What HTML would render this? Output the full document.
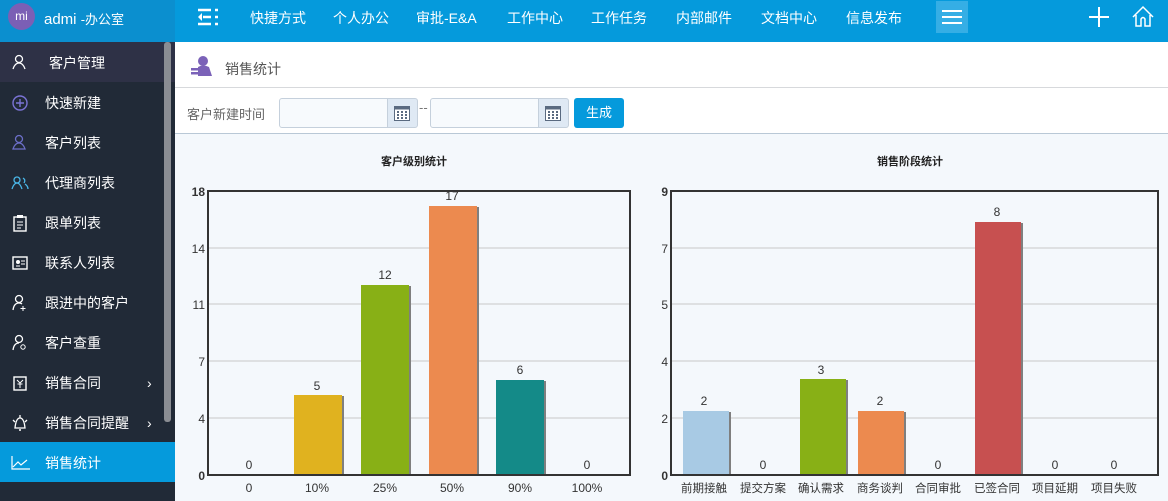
<!DOCTYPE html>
<html><head><meta charset="utf-8"><style>
*{margin:0;padding:0;box-sizing:border-box}
body{width:1168px;height:501px;overflow:hidden;font-family:"Liberation Sans","Noto Sans CJK SC",sans-serif;background:#f4f8fc;position:relative}
.a{position:absolute}
.top{left:0;top:0;width:1168px;height:42px;background:#059adc}
.logo{left:0;top:0;width:175px;height:42px;background:#0b8fcf}
.nav{top:0;height:36px;line-height:36px;color:#fff;font-size:14px}
.side{left:0;top:42px;width:175px;height:459px;background:#212a37}
.item{left:0;width:175px;height:40px;line-height:40px;color:#fff;font-size:14px}
.item span{position:absolute;left:45px}
.item svg{position:absolute;left:11px;top:11px}
</style></head><body>
<div class="a top"></div>
<div class="a logo"></div>
<div class="a" style="left:8px;top:3px;width:27px;height:27px;border-radius:50%;background:#7b5fb5;color:#fff;font-size:12px;line-height:26px;text-align:center">mi</div>
<div class="a" style="left:44px;top:9px;color:#fff;font-size:15px">admi <span style="font-size:13px">-办公室</span></div>
<svg class="a" style="left:197px;top:8px" width="22" height="18"><g stroke="#fff" stroke-width="2.5"><line x1="1" y1="2" x2="14" y2="2"/><line x1="6" y1="9" x2="14" y2="9"/><line x1="1" y1="16" x2="14" y2="16"/><line x1="18" y1="2" x2="21" y2="2"/><line x1="18" y1="9" x2="21" y2="9"/><line x1="18" y1="16" x2="21" y2="16"/></g><path d="M5 5 L1 9 L5 13" fill="#fff"/></svg>
<div class="a nav" style="left:250px">快捷方式</div>
<div class="a nav" style="left:333px">个人办公</div>
<div class="a nav" style="left:416px">审批-E&amp;A</div>
<div class="a nav" style="left:507px">工作中心</div>
<div class="a nav" style="left:591px">工作任务</div>
<div class="a nav" style="left:676px">内部邮件</div>
<div class="a nav" style="left:761px">文档中心</div>
<div class="a nav" style="left:846px">信息发布</div>
<div class="a" style="left:936px;top:1px;width:32px;height:32px;background:#35aee5"></div>
<svg class="a" style="left:942px;top:9px" width="20" height="16"><g stroke="#fff" stroke-width="2"><line x1="0" y1="2" x2="20" y2="2"/><line x1="0" y1="8" x2="20" y2="8"/><line x1="0" y1="14" x2="20" y2="14"/></g></svg>
<svg class="a" style="left:1088px;top:6px" width="22" height="22"><g stroke="#fff" stroke-width="2"><line x1="11" y1="1" x2="11" y2="21"/><line x1="1" y1="11" x2="21" y2="11"/></g></svg>
<svg class="a" style="left:1131px;top:5px" width="24" height="22"><path d="M2 12 L12 2 L22 12 M5 10 V21 H10 V14 Q12 11 14 14 V21 H19 V10" fill="none" stroke="#fff" stroke-width="1.5"/></svg>

<div class="a side"></div>
<div class="a" style="left:0;top:42px;width:175px;height:40px;background:#2e3146"></div>
<div class="a" style="left:164px;top:42px;width:7px;height:380px;background:#8a8d93;border-radius:3px"></div>
<div class="a" style="left:0;top:442px;width:175px;height:40px;background:#059adc"></div>
<div class="a item" style="top:43px"><svg width="18" height="18"><circle cx="8" cy="5" r="3.5" fill="none" stroke="#fff" stroke-width="1.3"/><path d="M2 15 Q4 9 8 9 Q12 9 14 15" fill="none" stroke="#fff" stroke-width="1.3"/></svg><span style="left:49px">客户管理</span></div>
<div class="a item" style="top:83px"><svg width="18" height="18"><circle cx="9" cy="9" r="7" fill="none" stroke="#7b74d6" stroke-width="1.4"/><path d="M9 5V13M5 9H13" stroke="#7b74d6" stroke-width="1.4"/></svg><span>快速新建</span></div>
<div class="a item" style="top:123px"><svg width="18" height="18"><circle cx="8" cy="5" r="3.5" fill="none" stroke="#6c6fc9" stroke-width="1.3"/><path d="M2 15 Q4 9 8 9 Q12 9 14 15 Z" fill="none" stroke="#6c6fc9" stroke-width="1.3"/></svg><span>客户列表</span></div>
<div class="a item" style="top:163px"><svg width="18" height="18"><circle cx="6" cy="6" r="3" fill="none" stroke="#4ab7e8" stroke-width="1.3"/><path d="M1 15 Q3 9 6 9 Q9 9 11 15 M12 4 Q15 6 13 9 M14 10 Q17 12 17 15" fill="none" stroke="#4ab7e8" stroke-width="1.3"/></svg><span>代理商列表</span></div>
<div class="a item" style="top:203px"><svg width="18" height="18"><rect x="3" y="3" width="12" height="14" fill="none" stroke="#fff" stroke-width="1.4"/><rect x="6" y="1" width="6" height="3" fill="#fff"/><path d="M6 8H12M6 11H12M6 14H10" stroke="#fff"/></svg><span>跟单列表</span></div>
<div class="a item" style="top:243px"><svg width="18" height="18"><rect x="2" y="3" width="14" height="12" fill="none" stroke="#fff" stroke-width="1.4"/><circle cx="7" cy="8" r="2" fill="#fff"/><path d="M10 7H14M10 10H14M5 12H9" stroke="#fff"/></svg><span>联系人列表</span></div>
<div class="a item" style="top:283px"><svg width="18" height="18"><circle cx="8" cy="5" r="3.5" fill="none" stroke="#fff" stroke-width="1.3"/><path d="M2 16 Q3 9 8 9 Q10 9 11 10" fill="none" stroke="#fff" stroke-width="1.3"/><path d="M12 12V17M9.5 14.5H14.5" stroke="#fff"/></svg><span>跟进中的客户</span></div>
<div class="a item" style="top:323px"><svg width="18" height="18"><circle cx="8" cy="5" r="3.5" fill="none" stroke="#fff" stroke-width="1.3"/><path d="M2 16 Q3 9 8 9" fill="none" stroke="#fff" stroke-width="1.3"/><circle cx="12" cy="13" r="2.2" fill="none" stroke="#fff"/></svg><span>客户查重</span></div>
<div class="a item" style="top:363px"><svg width="18" height="18"><rect x="3" y="3" width="12" height="13" fill="none" stroke="#fff" stroke-width="1.4"/><path d="M6 6L9 9L12 6M9 9V14M6.5 10H11.5" stroke="#fff" fill="none"/></svg><span>销售合同</span><span style="left:147px">›</span></div>
<div class="a item" style="top:403px"><svg width="18" height="18"><path d="M4 14 Q5 4 9 4 Q13 4 14 14 Z M9 1V4M2 6L4 8M16 6L14 8" fill="none" stroke="#fff" stroke-width="1.3"/><circle cx="9" cy="16" r="1" fill="#fff"/></svg><span>销售合同提醒</span><span style="left:147px">›</span></div>
<div class="a item" style="top:443px"><svg width="20" height="18"><path d="M1 2V15H19M2 13L7 8L10 11L16 6" fill="none" stroke="#fff" stroke-width="1.2"/></svg><span>销售统计</span></div>

<div class="a" style="left:175px;top:42px;width:993px;height:46px;background:#fff;border-bottom:1px solid #d7d9dc"></div>
<svg class="a" style="left:190px;top:55px" width="24" height="22"><circle cx="13" cy="6" r="5" fill="#7b62b8"/><path d="M8 12 Q13 9 19 12 L22 21 H8Z" fill="#7b62b8"/><rect x="1" y="13" width="11" height="2.5" fill="#7b62b8"/><rect x="1" y="17" width="11" height="2.5" fill="#7b62b8"/></svg>
<div class="a" style="left:225px;top:59px;font-size:14px;color:#555">销售统计</div>
<div class="a" style="left:175px;top:88px;width:993px;height:46px;background:#fff;border-bottom:1px solid #b9c8d6"></div>
<div class="a" style="left:187px;top:104px;font-size:13px;color:#666">客户新建时间</div>
<div class="a" style="left:279px;top:98px;width:110px;height:30px;border:1px solid #c5d0dc;border-radius:3px 0 0 3px;background:#f7fafd"></div>
<div class="a" style="left:387px;top:98px;width:31px;height:30px;border:1px solid #c5d0dc;border-radius:0 3px 3px 0;background:#dfe9f4"></div>
<div class="a" style="left:419px;top:100px;font-size:13px;color:#777">--</div>
<div class="a" style="left:430px;top:98px;width:110px;height:30px;border:1px solid #c5d0dc;border-radius:3px 0 0 3px;background:#f7fafd"></div>
<div class="a" style="left:538px;top:98px;width:31px;height:30px;border:1px solid #c5d0dc;border-radius:0 3px 3px 0;background:#dfe9f4"></div>
<svg class="a" style="left:394px;top:104px" width="16" height="17"><rect x="0.5" y="2.5" width="15" height="14" fill="#fff" stroke="#5a6a80"/><rect x="0.5" y="2.5" width="15" height="3" fill="#5a6a80"/><g fill="#5a6a80"><rect x="3" y="7" width="2" height="2"/><rect x="7" y="7" width="2" height="2"/><rect x="11" y="7" width="2" height="2"/><rect x="3" y="10" width="2" height="2"/><rect x="7" y="10" width="2" height="2"/><rect x="11" y="10" width="2" height="2"/><rect x="3" y="13" width="2" height="2"/><rect x="7" y="13" width="2" height="2"/><rect x="11" y="13" width="2" height="2"/></g></svg>
<svg class="a" style="left:545px;top:104px" width="16" height="17"><rect x="0.5" y="2.5" width="15" height="14" fill="#fff" stroke="#5a6a80"/><rect x="0.5" y="2.5" width="15" height="3" fill="#5a6a80"/><g fill="#5a6a80"><rect x="3" y="7" width="2" height="2"/><rect x="7" y="7" width="2" height="2"/><rect x="11" y="7" width="2" height="2"/><rect x="3" y="10" width="2" height="2"/><rect x="7" y="10" width="2" height="2"/><rect x="11" y="10" width="2" height="2"/><rect x="3" y="13" width="2" height="2"/><rect x="7" y="13" width="2" height="2"/><rect x="11" y="13" width="2" height="2"/></g></svg>
<div class="a" style="left:574px;top:98px;width:50px;height:30px;background:#059adc;border-radius:3px;color:#fff;font-size:13px;line-height:30px;text-align:center">生成</div>

<svg class="a" style="left:175px;top:135px" width="993" height="366" font-family="Liberation Sans,Noto Sans CJK SC,sans-serif" font-size="12" fill="#333">
<g transform="translate(-175,-135)">
<text x="414" y="165" text-anchor="middle" font-weight="bold" font-size="11" fill="#222">客户级别统计</text>
<text x="910" y="165" text-anchor="middle" font-weight="bold" font-size="11" fill="#222">销售阶段统计</text>
<g stroke="#c8c8c8"><line x1="208" y1="418" x2="630" y2="418"/><line x1="208" y1="361" x2="630" y2="361"/><line x1="208" y1="304" x2="630" y2="304"/><line x1="208" y1="248" x2="630" y2="248"/>
<line x1="671" y1="418" x2="1158" y2="418"/><line x1="671" y1="361" x2="1158" y2="361"/><line x1="671" y1="304" x2="1158" y2="304"/><line x1="671" y1="248" x2="1158" y2="248"/></g>
<rect x="296" y="396" width="48" height="79" fill="#7f7f7f"/><rect x="294" y="395" width="48" height="80" fill="#e0b21f"/>
<rect x="363" y="286" width="48" height="189" fill="#7f7f7f"/><rect x="361" y="285" width="48" height="190" fill="#88b016"/>
<rect x="431" y="207" width="48" height="268" fill="#7f7f7f"/><rect x="429" y="206" width="48" height="269" fill="#ec8a4f"/>
<rect x="498" y="381" width="48" height="94" fill="#7f7f7f"/><rect x="496" y="380" width="48" height="95" fill="#148a88"/>
<g text-anchor="middle"><text x="249" y="469">0</text><text x="317" y="390">5</text><text x="385" y="279">12</text><text x="452" y="200">17</text><text x="520" y="374">6</text><text x="587" y="469">0</text>
<text x="249" y="492">0</text><text x="317" y="492">10%</text><text x="385" y="492">25%</text><text x="452" y="492">50%</text><text x="520" y="492">90%</text><text x="587" y="492">100%</text></g>
<g text-anchor="end"><text x="205" y="196" font-weight="bold">18</text><text x="205" y="253">14</text><text x="205" y="309">11</text><text x="205" y="366">7</text><text x="205" y="423">4</text><text x="205" y="480" font-weight="bold">0</text></g>
<rect x="208" y="191" width="422" height="284" fill="none" stroke="#333" stroke-width="2"/>
<rect x="685" y="412" width="46" height="63" fill="#7f7f7f"/><rect x="683" y="411" width="46" height="64" fill="#a8cae4"/>
<rect x="802" y="380" width="46" height="95" fill="#7f7f7f"/><rect x="800" y="379" width="46" height="96" fill="#88b016"/>
<rect x="860" y="412" width="46" height="63" fill="#7f7f7f"/><rect x="858" y="411" width="46" height="64" fill="#ec8a4f"/>
<rect x="977" y="223" width="46" height="252" fill="#7f7f7f"/><rect x="975" y="222" width="46" height="253" fill="#c75050"/>
<g text-anchor="middle"><text x="704" y="405">2</text><text x="763" y="469">0</text><text x="821" y="374">3</text><text x="880" y="405">2</text><text x="938" y="469">0</text><text x="997" y="216">8</text><text x="1055" y="469">0</text><text x="1114" y="469">0</text>
<g font-size="11.5"><text x="704" y="492">前期接触</text><text x="763" y="492">提交方案</text><text x="821" y="492">确认需求</text><text x="880" y="492">商务谈判</text><text x="938" y="492">合同审批</text><text x="997" y="492">已签合同</text><text x="1055" y="492">项目延期</text><text x="1114" y="492">项目失败</text></g></g>
<g text-anchor="end"><text x="668" y="196" font-weight="bold">9</text><text x="668" y="253">7</text><text x="668" y="309">5</text><text x="668" y="366">4</text><text x="668" y="423">2</text><text x="668" y="480" font-weight="bold">0</text></g>
<rect x="671" y="191" width="487" height="284" fill="none" stroke="#333" stroke-width="2"/>
</g></svg>
</body></html>
